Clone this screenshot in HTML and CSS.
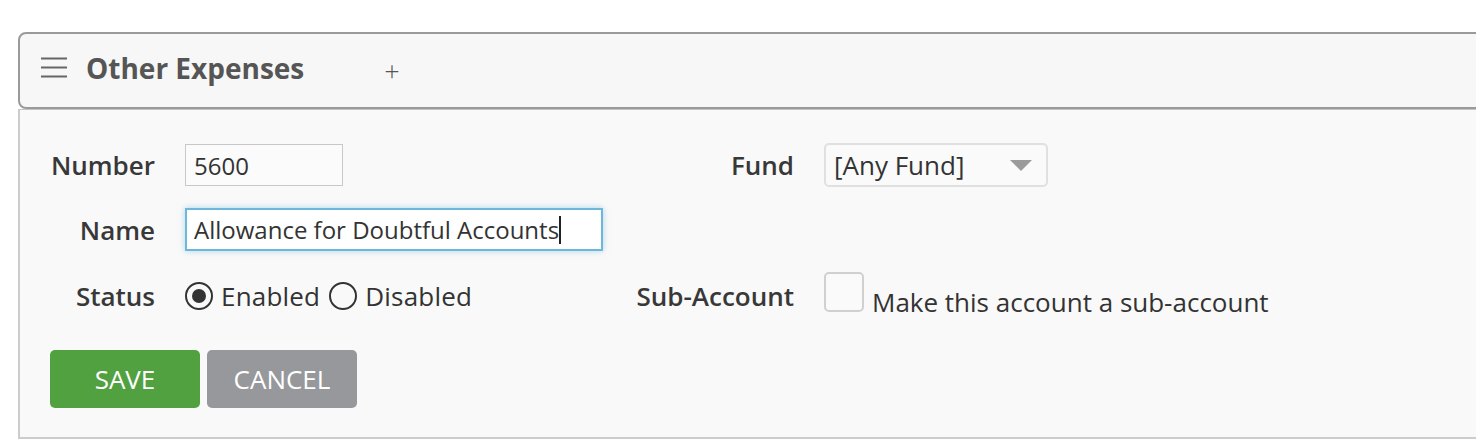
FILE: index.html
```html
<!DOCTYPE html>
<html lang="en">
<head>
  <meta charset="UTF-8">
  <title>Other Expenses</title>
  <link rel="stylesheet" href="styles.css">
</head>
<body>
  <div class="account-panel">
    <div class="panel-header">
      <span class="menu-icon">
        <svg width="26" height="22" viewBox="0 0 26 22">
          <path d="M0 1.5h26M0 10.5h26M0 19.5h26" stroke="#666" stroke-width="2"/>
        </svg>
      </span>
      <span class="panel-title">Other Expenses</span>
      <span class="add-btn">+</span>
    </div>

    <div class="panel-body">
      <div class="form-grid">
        <label class="field-label" for="number">Number</label>
        <div><input class="text-input number-input" id="number" type="text" value="5600"></div>
        <label class="field-label">Fund</label>
        <div>
          <div class="select-box">
            <span>[Any Fund]</span>
            <span class="select-arrow"></span>
          </div>
        </div>

        <label class="field-label">Name</label>
        <div class="name-field"><span>Allowance for Doubtful Accounts</span><span class="caret"></span></div>
        <div></div>
        <div></div>

        <label class="field-label low">Status</label>
        <div class="radio-group low">
          <span class="radio checked"></span><span class="radio-text">Enabled</span>
          <span class="radio"></span><span class="radio-text">Disabled</span>
        </div>
        <label class="field-label low">Sub-Account</label>
        <div class="check-group">
          <span class="checkbox"></span>
          <span class="check-text">Make this account a sub-account</span>
        </div>
      </div>

      <div class="actions">
        <button class="btn btn-save">SAVE</button>
        <button class="btn btn-cancel">CANCEL</button>
      </div>
    </div>
  </div>
</body>
</html>
```

FILE: styles.css
```css
body {
  font-family: 'Open Sans', 'Liberation Sans', sans-serif;
  margin: 0;
  padding: 0;
  background-color: #ffffff;
  color: #333;
  overflow: hidden;
}

.account-panel {
  margin: 32px 0 0 18px;
  width: calc(100% + 20px);
}

.panel-header {
  display: flex;
  align-items: center;
  height: 67px;
  padding: 0 0 6px 21px;
  background-color: #f7f7f7;
  border: 2px solid #9a9a9a;
  border-radius: 8px;
}

.menu-icon {
  display: flex;
  width: 26px;
  margin-right: 19px;
}

.panel-title {
  font-size: 28px;
  font-weight: 700;
  color: #555;
}

.add-btn {
  margin-left: 80px;
  font-size: 27px;
  font-weight: 300;
  color: #555;
  padding-top: 6px;
}

.panel-body {
  background-color: #f9f9f9;
  border: 2px solid #cccccc;
  border-top: 1px solid #c4c4c4;
  padding: 33px 30px 29px;
}

.form-grid {
  display: grid;
  grid-template-columns: 105px 418px 161px auto;
  column-gap: 30px;
  row-gap: 21px;
  align-items: center;
}

.field-label {
  font-size: 26px;
  font-weight: 600;
  color: #383838;
  text-align: right;
  white-space: nowrap;
}

.low {
  padding-top: 6px;
}

.text-input {
  font-family: inherit;
  font-size: 24px;
  color: #333;
  height: 42px;
  box-sizing: border-box;
  padding: 0 8px;
  border: 1px solid #c8c8c8;
  background-color: #fbfbfb;
  display: block;
}

.number-input {
  width: 158px;
}

.name-field {
  display: flex;
  align-items: center;
  height: 43px;
  box-sizing: border-box;
  padding: 0 7px;
  font-size: 24px;
  color: #333;
  background-color: #fff;
  border: 2px solid #6cb7da;
  box-shadow: 0 0 6px rgba(108, 183, 218, 0.55);
}

.caret {
  width: 2px;
  height: 28px;
  background-color: #222;
}

.select-box {
  display: flex;
  align-items: center;
  justify-content: space-between;
  width: 224px;
  height: 44px;
  box-sizing: border-box;
  padding: 0 14px 0 8px;
  font-size: 26px;
  color: #333;
  background-color: #fafafa;
  border: 2px solid #e0e0e0;
  border-radius: 5px;
}

.select-arrow {
  width: 0;
  height: 0;
  border-left: 11px solid transparent;
  border-right: 11px solid transparent;
  border-top: 11px solid #9b9b9b;
}

.radio-group {
  display: flex;
  align-items: center;
  font-size: 26px;
  color: #333;
  letter-spacing: 0.2px;
}

.radio {
  width: 28px;
  height: 28px;
  box-sizing: border-box;
  border: 2px solid #333;
  border-radius: 50%;
  position: relative;
  margin-right: 8px;
}

.radio.checked::after {
  content: '';
  position: absolute;
  top: 5px;
  left: 5px;
  width: 14px;
  height: 14px;
  border-radius: 50%;
  background-color: #333;
}

.radio-text {
  margin-right: 9px;
}

.check-group {
  display: flex;
  align-self: start;
  align-items: flex-end;
  font-size: 26px;
  color: #333;
}

.checkbox {
  width: 40px;
  height: 40px;
  box-sizing: border-box;
  border: 2px solid #d0d0d0;
  border-radius: 5px;
  background-color: #fafafa;
  margin-right: 8px;
}

.check-text {
  line-height: 1;
  margin-bottom: -3px;
}

.actions {
  display: flex;
  gap: 7px;
  margin-top: 36px;
}

.btn {
  font-family: inherit;
  font-size: 26px;
  color: #fff;
  width: 150px;
  height: 58px;
  border: none;
  border-radius: 5px;
  cursor: pointer;
}

.btn-save {
  background-color: #52a140;
}

.btn-cancel {
  background-color: #97989b;
}
```
